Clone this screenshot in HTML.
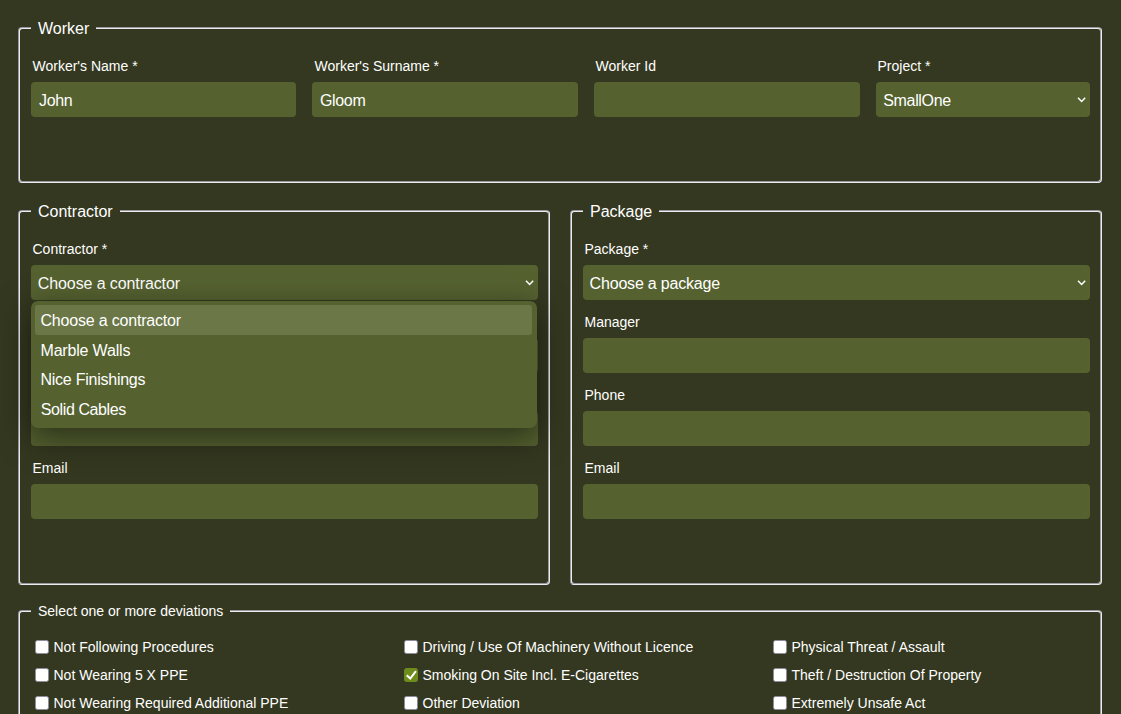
<!DOCTYPE html>
<html lang="en">
<head>
<meta charset="utf-8">
<title>Worker deviation form</title>
<style>
*{box-sizing:border-box;margin:0;padding:0}
html,body{width:1121px;height:714px;overflow:hidden;background:#343820}
body{position:relative;font-family:"Liberation Sans",Arial,sans-serif;color:#fff}
fieldset{position:absolute;border:2px groove #ebebf1;border-radius:4px;min-width:0}
legend{position:absolute;top:-10px;left:11px;padding:0 7px;background:#343820;font-size:16px;line-height:20px;white-space:nowrap}
label.l{position:absolute;margin-left:-0.5px;font-size:14px;line-height:16px;white-space:nowrap}
.in{position:absolute;height:35px;background:#556230;border-radius:4px;font-size:16px;line-height:37px;padding:0 8px;white-space:nowrap;letter-spacing:-0.35px}
.sel svg{position:absolute;right:4.4px;top:15px}
#fw{left:18px;top:27px;width:1084px;height:156px}
#fc{left:18px;top:210px;width:532px;height:375px}
#fp{left:570px;top:210px;width:532px;height:375px}
#fd{left:18px;top:610px;width:1084px;height:140px}
#fd legend{font-size:14px;top:-11px}
.pop{position:absolute;left:30.5px;top:300.6px;width:506px;height:127.9px;background:#556230;border-radius:7px;box-shadow:0 9px 32px 1px rgba(0,0,0,.5);z-index:5}
.opt{position:absolute;left:4px;width:497px;height:30px;border-radius:3px;font-size:16px;line-height:32px;padding-left:6px;letter-spacing:-0.35px;white-space:nowrap}
.opt.h{background:#6b7747}
.cb{position:absolute;font-size:14px;line-height:16px;white-space:nowrap}
.cb i{position:absolute;left:-1px;top:1px;width:14px;height:14px;background:#fff;border:1px solid #8d8d9c;border-radius:2.5px}
.cb i.on{background:#6e8c1c;border-color:#6e8c1c}
.cb i svg{position:absolute;left:-1px;top:-1px}
.cb span{position:absolute;left:17.5px;top:0}
</style>
</head>
<body>

<fieldset id="fw">
  <legend>Worker</legend>
  <label class="l" style="left:13px;top:29px">Worker's Name *</label>
  <div class="in" style="left:11px;top:53px;width:265px">John</div>
  <label class="l" style="left:295px;top:29px">Worker's Surname *</label>
  <div class="in" style="left:292px;top:53px;width:266px">Gloom</div>
  <label class="l" style="left:576px;top:29px">Worker Id</label>
  <div class="in" style="left:574px;top:53px;width:266px"></div>
  <label class="l" style="left:858px;top:29px">Project *</label>
  <div class="in sel" style="left:856px;top:53px;width:214px;padding-left:7.3px">SmallOne<svg width="9" height="6" viewBox="0 0 9 6"><path d="M1 0.8 L4.6 4.5 L8.2 0.8" fill="none" stroke="#fff" stroke-width="1.5"/></svg></div>
</fieldset>

<fieldset id="fc">
  <legend>Contractor</legend>
  <label class="l" style="left:13px;top:29px">Contractor *</label>
  <div class="in sel" style="left:11px;top:53px;width:507px;padding-left:6.8px;letter-spacing:-0.1px">Choose a contractor<svg width="9" height="6" viewBox="0 0 9 6"><path d="M1 0.8 L4.6 4.5 L8.2 0.8" fill="none" stroke="#fff" stroke-width="1.5"/></svg></div>
  <label class="l" style="left:13px;top:102px">Manager</label>
  <div class="in" style="left:11px;top:126px;width:507px"></div>
  <label class="l" style="left:13px;top:175px">Phone</label>
  <div class="in" style="left:11px;top:199px;width:507px"></div>
  <label class="l" style="left:13px;top:248px">Email</label>
  <div class="in" style="left:11px;top:272px;width:507px"></div>
</fieldset>

<fieldset id="fp">
  <legend>Package</legend>
  <label class="l" style="left:13px;top:29px">Package *</label>
  <div class="in sel" style="left:11px;top:53px;width:507px;padding-left:6.6px;letter-spacing:-0.19px">Choose a package<svg width="9" height="6" viewBox="0 0 9 6"><path d="M1 0.8 L4.6 4.5 L8.2 0.8" fill="none" stroke="#fff" stroke-width="1.5"/></svg></div>
  <label class="l" style="left:13px;top:102px">Manager</label>
  <div class="in" style="left:11px;top:126px;width:507px"></div>
  <label class="l" style="left:13px;top:175px">Phone</label>
  <div class="in" style="left:11px;top:199px;width:507px"></div>
  <label class="l" style="left:13px;top:248px">Email</label>
  <div class="in" style="left:11px;top:272px;width:507px"></div>
</fieldset>

<div class="pop">
  <div class="opt h" style="top:4px;letter-spacing:-0.19px">Choose a contractor</div>
  <div class="opt" style="top:34px;letter-spacing:-0.18px;padding-left:6px">Marble Walls</div>
  <div class="opt" style="top:63.5px;letter-spacing:-0.25px;padding-left:6px">Nice Finishings</div>
  <div class="opt" style="top:93px;letter-spacing:-0.4px;padding-left:6.3px">Solid Cables</div>
</div>

<fieldset id="fd">
  <legend>Select one or more deviations</legend>
  <div class="cb" style="left:16px;top:27px"><i></i><span>Not Following Procedures</span></div>
  <div class="cb" style="left:16px;top:55px"><i></i><span>Not Wearing 5 X PPE</span></div>
  <div class="cb" style="left:16px;top:83px"><i></i><span>Not Wearing Required Additional PPE</span></div>
  <div class="cb" style="left:385px;top:27px"><i></i><span>Driving / Use Of Machinery Without Licence</span></div>
  <div class="cb" style="left:385px;top:55px"><i class="on"><svg width="14" height="14" viewBox="0 0 14 14"><path d="M2.7 7.2 L6.3 10.6 L11.9 3.2" fill="none" stroke="#fff" stroke-width="2"/></svg></i><span>Smoking On Site Incl. E-Cigarettes</span></div>
  <div class="cb" style="left:385px;top:83px"><i></i><span>Other Deviation</span></div>
  <div class="cb" style="left:754px;top:27px"><i></i><span>Physical Threat / Assault</span></div>
  <div class="cb" style="left:754px;top:55px"><i></i><span>Theft / Destruction Of Property</span></div>
  <div class="cb" style="left:754px;top:83px"><i></i><span>Extremely Unsafe Act</span></div>
</fieldset>

</body>
</html>
